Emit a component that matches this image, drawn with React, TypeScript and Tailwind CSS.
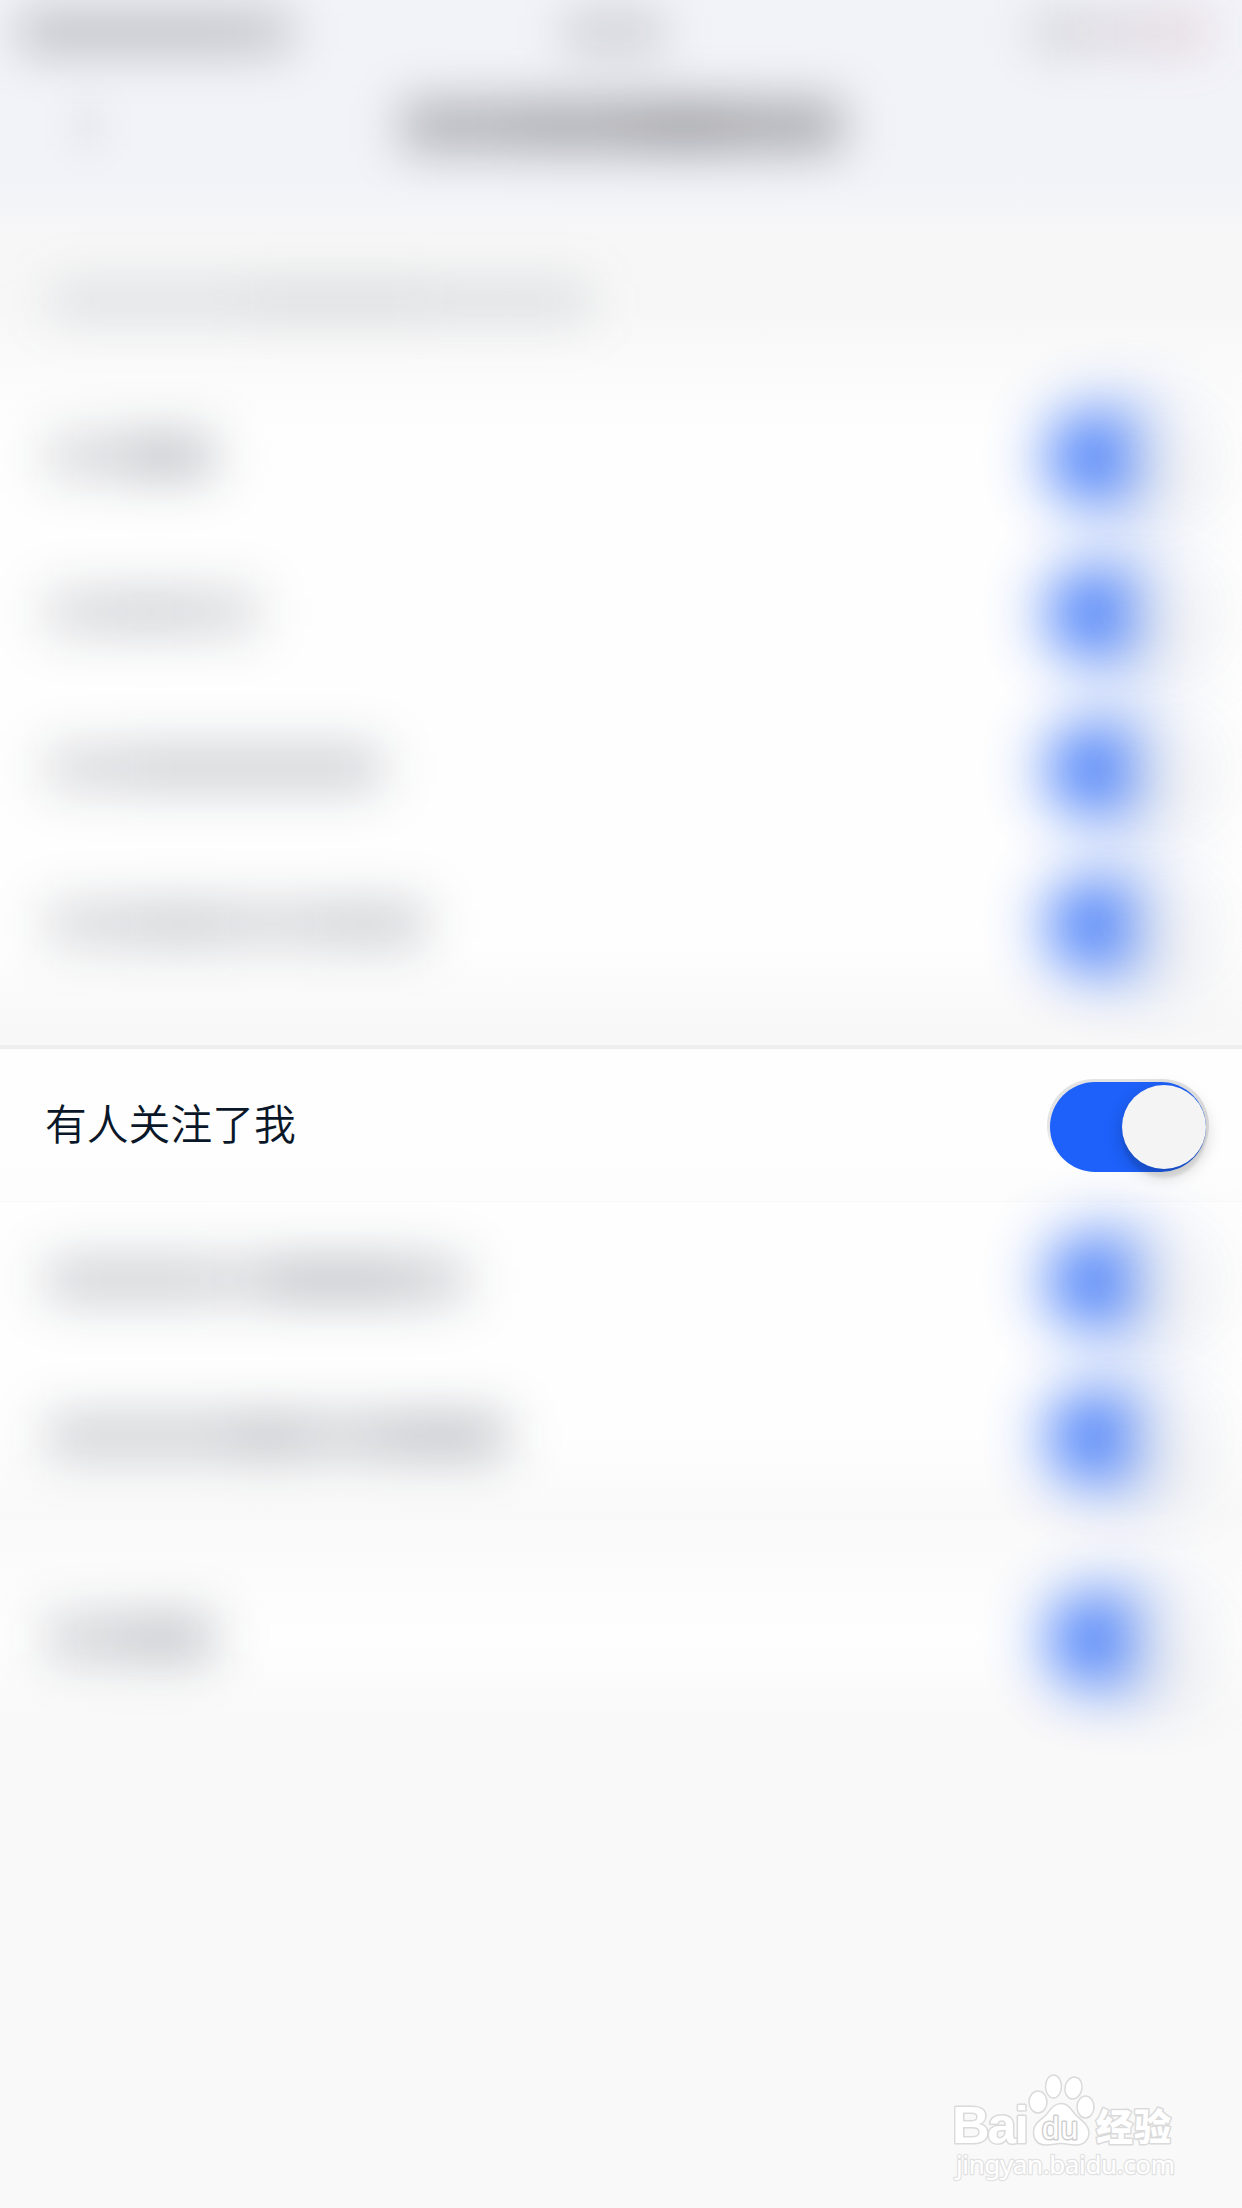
import clsx from "clsx";

type Segment = { width: string; tone: string };

const dim = "bg-[#0a1729]/18";
const mid = "bg-[#0a1729]/22";
const dark = "bg-[#0a1729]/28";

const firstGroup: Segment[][] = [
  [{ width: "w-20", tone: dim }, { width: "w-22", tone: dark }],
  [{ width: "w-20", tone: dim }, { width: "w-12", tone: mid }, { width: "w-21", tone: dim }],
  [{ width: "w-21", tone: dim }, { width: "w-42", tone: mid }, { width: "w-21", tone: mid }],
  [{ width: "w-21", tone: dim }, { width: "w-25", tone: mid }, { width: "w-21", tone: dim }, { width: "w-28", tone: mid }],
];

const secondGroup: Segment[][] = [
  [{ width: "w-41", tone: mid }, { width: "w-14", tone: dim }, { width: "w-35", tone: dark }, { width: "w-15", tone: mid }],
  [{ width: "w-48", tone: mid }, { width: "w-15", tone: dark }, { width: "w-21", tone: mid }, { width: "w-31", tone: dark }],
];

const lastGroup: Segment[][] = [
  [{ width: "w-20", tone: mid }, { width: "w-22", tone: dark }],
];

function Toggle() {
  return (
    <div className="relative z-10 h-[93px] w-[162px] rounded-full bg-linear-to-b from-[#e3e3e3] from-50% to-transparent to-90% pt-[3px] pl-[3px]">
      <div className="flex h-[90px] w-[156px] items-center justify-end rounded-full bg-[#1d61fa]">
        <div className="size-[84px] rounded-full bg-[#f4f4f4] shadow-[0_9px_3px_rgba(0,0,0,0.08),0_6px_18px_rgba(0,0,0,0.2)]" />
      </div>
    </div>
  );
}

function Smear({ segments, className }: { segments: Segment[]; className: string }) {
  return (
    <div className={clsx("flex", className)}>
      {segments.map((s, i) => (
        <div key={i} className={clsx("h-full", s.width, s.tone)} />
      ))}
    </div>
  );
}

function HiddenRow({ segments }: { segments: Segment[] }) {
  return (
    <div className="flex h-[156px] items-center justify-between pr-[33px] pl-[46px]">
      <Smear segments={segments} className="h-10 blur-[26px]" />
      <div className="opacity-92 blur-[32px]">
        <Toggle />
      </div>
    </div>
  );
}

function Watermark() {
  return (
    <svg
      className="mr-[62px] ml-auto h-[116px] w-[232px]"
      viewBox="0 0 232 116"
      fill="#fff"
      stroke="#dadada"
      strokeWidth="1.5"
      strokeLinejoin="round"
      fontFamily="Liberation Sans, sans-serif"
    >
      <g fontWeight="700" strokeWidth="3" paintOrder="stroke">
        <text x="4" y="75" fontSize="52" textLength="77">Bai</text>
        <text x="148" y="73" fontSize="37" fontWeight="900" fontFamily="Noto Sans CJK SC" textLength="75">经验</text>
      </g>
      <ellipse cx="90" cy="34" rx="9" ry="11" />
      <ellipse cx="105.500" cy="18.500" rx="8" ry="11.500" />
      <ellipse cx="125.500" cy="20" rx="8.500" ry="11" transform="rotate(12 125.500 20)" />
      <ellipse cx="137.500" cy="39" rx="8.500" ry="11" />
      <path d="M113 35.500C106 35.500 103 41 98 47C93 52 86 55 85.500 63C85 72 90 77 98 77C105 77 107 75.500 113 75.500C119 75.500 122 77.500 128 77C136 77 141 72 141 64C140 55 132 52 127 46C122 40 120 35.500 113 35.500Z" />
      <text x="94" y="71" fontSize="31" textLength="36" stroke="#cfcfcf" strokeWidth="3" paintOrder="stroke">du</text>
      <text x="8" y="105.500" fontSize="26" fontFamily="Noto Sans, sans-serif" textLength="219" stroke="#e2e2e2" strokeWidth="2.500" paintOrder="stroke">
        jingyan.baidu.com
      </text>
    </svg>
  );
}

export default function App() {
  return (
    <div className="flex h-[2208px] w-[1242px] flex-col overflow-hidden bg-[#f9f9f9] font-['Liberation_Sans','Noto_Sans_CJK_SC',sans-serif]">
      <div className="h-[1045px] shrink-0 overflow-hidden">
        <header className="h-[240px] bg-linear-to-b from-[#f2f3f9] from-75% to-[#f7f7f7]">
          <div className="flex h-16 items-center justify-between pr-[34px] pl-5">
            <Smear
              segments={[{ width: "w-16", tone: "bg-black/20" }, { width: "w-38", tone: "bg-black/20" }, { width: "w-14", tone: "bg-black/18" }]}
              className="h-11 w-[304px] blur-[24px]"
            />
            <div className="h-10 w-[100px] bg-black/15 blur-[24px]" />
            <Smear
              segments={[{ width: "w-12", tone: "bg-black/12" }, { width: "w-20", tone: "bg-[#6a4a58]/15" }, { width: "w-12", tone: "bg-[#a04040]/15" }]}
              className="h-10 w-[304px] justify-end blur-[24px]"
            />
          </div>
          <div className="flex h-[124px] items-center">
            <div className="ml-[78px] h-12 w-5 bg-black/7 blur-[18px]" />
            <Smear
              segments={[{ width: "w-28", tone: "bg-black/27" }, { width: "w-30", tone: "bg-black/30" }, { width: "w-25", tone: "bg-black/34" }, { width: "w-27", tone: "bg-black/30" }]}
              className="ml-[304px] h-[50px] blur-[25px]"
            />
          </div>
        </header>
        <div className="flex h-[138px] items-center bg-linear-to-b from-[#f7f7f7] from-50% to-[#fbfbfb] pb-4 pl-[50px]">
          <Smear
            segments={[{ width: "w-50", tone: "bg-[#5a6478]/15" }, { width: "w-44", tone: "bg-[#5a6470]/18" }, { width: "w-41", tone: "bg-[#5a6478]/16" }]}
            className="h-10 blur-[25px]"
          />
        </div>
        <div className="h-[667px] bg-[linear-gradient(#fbfbfb,#fefefe_8%,#fefefe_85%,#f8f8f8_97%)]">
          {firstGroup.map((segments, i) => (
            <HiddenRow key={i} segments={segments} />
          ))}
        </div>
      </div>

      <div className="flex h-[157px] shrink-0 items-center justify-between border-t-4 border-b-1 border-t-[#eeeeee] border-b-[#f9f9f9] bg-linear-to-b from-[#fefefe] from-75% to-[#fcfcfc] pr-[33px] pl-[45px]">
        <span className="pb-[5px] font-['Noto_Sans_CJK_SC',sans-serif] text-[41.800px] font-[350] text-[#0a1729]">有人关注了我</span>
        <Toggle />
      </div>

      <div className="shrink-0 bg-linear-to-b from-[#fefefe] from-75% to-[#f9f9f9]">
        {secondGroup.map((segments, i) => (
          <HiddenRow key={i} segments={segments} />
        ))}
      </div>
      <div className="h-[46px] shrink-0 bg-linear-to-b from-[#f9f9f9] to-[#fbfbfb]" />
      <div className="shrink-0 bg-linear-to-b from-[#fbfbfb] via-[#fefefe] to-[#f9f9f9]">
        {lastGroup.map((segments, i) => (
          <HiddenRow key={i} segments={segments} />
        ))}
      </div>

      <div className="mt-auto pb-[24px]">
        <Watermark />
      </div>
    </div>
  );
}
